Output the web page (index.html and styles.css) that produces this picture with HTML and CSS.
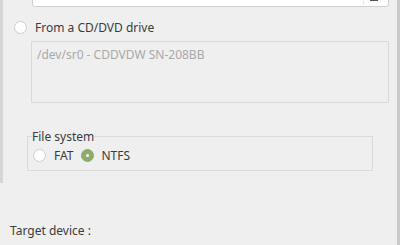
FILE: index.html
```html
<!DOCTYPE html>
<html lang="en">
<head>
    <meta charset="UTF-8">
    <title>Source</title>
    <link rel="stylesheet" href="styles.css">
</head>
<body>
    <div class="window">
        <div class="source-frame">
            <!-- image path input, scrolled mostly out of view -->
            <div class="path-input">
                <span class="input-sep"></span>
                <svg class="open-icon" width="10" height="12" viewBox="0 0 10 12">
                    <rect x="1" y="0" width="8" height="12" fill="#555"/>
                </svg>
            </div>

            <label class="radio-row">
                <span class="radio"></span>
                From a CD/DVD drive
            </label>

            <div class="drive-list">/dev/sr0 - CDDVDW SN-208BB</div>

            <fieldset class="fs-group">
                <legend>File system</legend>
                <label class="radio-row small"><span class="radio"></span>FAT</label>
                <label class="radio-row small"><span class="radio checked"></span>NTFS</label>
            </fieldset>
        </div>

        <div class="target-label">Target device :</div>
    </div>
</body>
</html>
```

FILE: styles.css
```css
/* base */
body {
    margin: 0;
    background-color: #efefef;
    font-family: "Noto Sans", "Open Sans", sans-serif;
    font-size: 12px;
    color: #3b3b3b;
}

.window {
    height: 245px;
    border-right: 3px solid #c9c9c9;
    box-sizing: border-box;
    overflow: hidden;
}

/* frame holding the source options */
.source-frame {
    display: flow-root;
    border-left: 3px solid #d6d6d6;
    height: 183px;
    box-sizing: border-box;
    padding-left: 11px;
    padding-right: 8px;
}

.path-input {
    margin-top: -21px;
    margin-left: 18px;
    height: 26px;
    background-color: #fff;
    border: 1px solid #cfcfcf;
    border-radius: 3px;
    position: relative;
}

.input-sep {
    position: absolute;
    right: 24px;
    top: 0;
    bottom: 2px;
    border-left: 1px dotted #d0d0d0;
}

.open-icon {
    position: absolute;
    right: 9px;
    bottom: 5px;
}

/* radio buttons */
.radio-row {
    display: flex;
    align-items: center;
    gap: 8px;
    height: 16px;
    margin-top: 12px;
}

.radio {
    width: 11px;
    height: 11px;
    border-radius: 50%;
    background-color: #fff;
    border: 1px solid #cdcdcd;
    flex-shrink: 0;
}

.radio.checked {
    background-color: #8dac6c;
    border-color: #8dac6c;
    position: relative;
}

.radio.checked::after {
    content: "";
    position: absolute;
    left: 4px;
    top: 4px;
    width: 3px;
    height: 3px;
    border-radius: 50%;
    background-color: #fff;
}

.drive-list {
    margin-top: 6px;
    margin-left: 17px;
    border: 1px solid #d9d9d9;
    padding: 4px 5px;
    box-sizing: border-box;
    height: 62px;
    color: #a9a9a9;
}

/* file system group box */
.fs-group {
    margin: 25px 17px 0 13px;
    padding: 0 5px 5px 5px;
    border: 1px solid #dadada;
    display: flex;
    gap: 7px;
    width: 346px;
    box-sizing: border-box;
}

.fs-group legend {
    padding: 0;
    margin-left: -1px;
}

.radio-row.small {
    margin-top: 0;
    height: 20px;
}

.target-label {
    padding-left: 10px;
    margin-top: 39px;
}
```
